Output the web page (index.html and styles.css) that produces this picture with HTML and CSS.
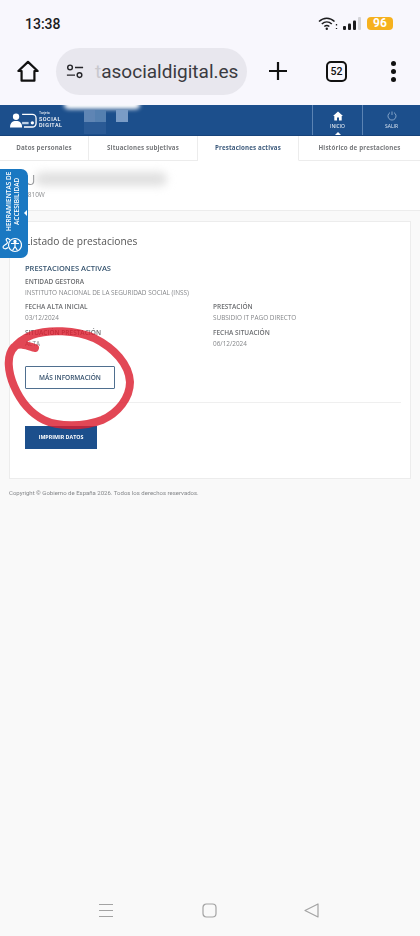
FILE: index.html
```html
<!DOCTYPE html>
<html lang="es">
<head>
    <meta charset="UTF-8">
    <meta name="viewport" content="width=device-width, initial-scale=1.0">
    <title>Tarjeta Social Digital</title>
    <link rel="stylesheet" href="styles.css">
</head>
<body>
    <div class="phone">
        <div class="status-bar">
            <span class="clock">13:38</span>
            <div class="status-icons">
                <svg width="20" height="15" viewBox="0 0 20 15" fill="none" stroke="#1c1c1e" stroke-width="1.5">
                    <path d="M1 5.500C5.500 1 12 1 16.500 5.500"/>
                    <path d="M3.800 8C6.800 5.300 10.800 5.300 13.800 8"/>
                    <path d="M6.300 10.500C7.800 9.200 9.800 9.200 11.300 10.500"/>
                    <circle cx="8.800" cy="12.800" r="1.200" fill="#1c1c1e" stroke="none"/>
                    <path d="M18.500 8v1.500M18.500 12v1" stroke-width="1.300"/>
                </svg>
                <svg width="19" height="14" viewBox="0 0 19 14" fill="#1c1c1e">
                    <rect x="0" y="9" width="3" height="4" rx="1"/>
                    <rect x="5" y="6.500" width="3" height="6.500" rx="1"/>
                    <rect x="10" y="3.500" width="3" height="9.500" rx="1"/>
                    <rect x="15" y="0" width="3" height="13" rx="1" fill="#d4d4d8"/>
                </svg>
                <span class="battery">96</span>
            </div>
        </div>

        <div class="toolbar">
            <svg class="tool-home" width="22" height="22" viewBox="0 0 24 24" fill="none" stroke="#111" stroke-width="2.400" stroke-linejoin="round">
                <path d="M1.500 12 12 2l10.500 10H19v10.500H5V12z"/>
            </svg>
            <div class="url-pill">
                <svg width="18" height="15" viewBox="0 0 20 16" fill="none" stroke="#26262a" stroke-width="1.600">
                    <circle cx="4.500" cy="3.500" r="2.600"/>
                    <path d="M10 3.500h9M1 12h9"/>
                    <circle cx="15" cy="12" r="2.600"/>
                </svg>
                <span class="url-text"><span class="url-fade">t</span>asocialdigital.es</span>
            </div>
            <svg class="tool-plus" width="20" height="20" viewBox="0 0 20 20" stroke="#111" stroke-width="2.200">
                <path d="M10 1v18M1 10h18"/>
            </svg>
            <span class="tab-count">52</span>
            <div class="tool-menu"><i></i><i></i><i></i></div>
        </div>

        <div class="site">
            <header class="site-header">
                <div class="logo">
                    <svg width="27" height="15" viewBox="0 0 29 16" fill="#fff">
                        <circle cx="6.500" cy="4" r="3.400"/>
                        <path d="M0 15.500c0-5 2.500-7 6.500-7s6.500 2 6.500 7z"/>
                        <path d="M13 1.500h11a4 4 0 0 1 4 4v5.500a4 4 0 0 1-4 4h-9" fill="none" stroke="#fff" stroke-width="1.400"/>
                        <rect x="13" y="9.500" width="7" height="2.500" fill="#bcd0e6"/>
                        <circle cx="24" cy="10.500" r="1.800"/>
                    </svg>
                    <div class="logo-text">
                        <small>Tarjeta</small>
                        <b>SOCIAL</b>
                        <b>DIGITAL</b>
                    </div>
                </div>
                <nav class="header-nav">
                    <a class="nav-item nav-current">
                        <svg width="10" height="10" viewBox="0 0 10 10" fill="#fff"><path d="M5 .5 10 5H8.700v4.500H6V6.500H4v3H1.300V5H0z"/></svg>
                        <span>INICIO</span>
                    </a>
                    <a class="nav-item nav-exit">
                        <svg width="10" height="10" viewBox="0 0 10 10" fill="none" stroke="#9db8d6" stroke-width=".8"><path d="M3 1.600a4 4 0 1 0 4 0M5 .5v3.500"/></svg>
                        <span>SALIR</span>
                    </a>
                </nav>
                <div class="glow"></div>
                <div class="pixel-patch"><i></i><i></i><i></i><i></i><i></i><i></i></div>
            </header>

            <div class="tabs">
                <a class="tab tab-a">Datos personales</a>
                <a class="tab tab-b">Situaciones subjetivas</a>
                <a class="tab tab-c tab-active">Prestaciones activas</a>
                <a class="tab tab-d">Histórico de prestaciones</a>
            </div>

            <section class="person">
                <div class="person-name">DU<span class="name-blur"></span></div>
                <div class="person-id">0810W</div>
            </section>

            <main class="content">
                <div class="card">
                    <h1>Listado de prestaciones</h1>
                    <h2>PRESTACIONES ACTIVAS</h2>
                    <div class="field field-first">
                        <h3>ENTIDAD GESTORA</h3>
                        <p>INSTITUTO NACIONAL DE LA SEGURIDAD SOCIAL (INSS)</p>
                    </div>
                    <div class="field-grid">
                        <div class="field">
                            <h3>FECHA ALTA INICIAL</h3>
                            <p>03/12/2024</p>
                        </div>
                        <div class="field">
                            <h3>PRESTACIÓN</h3>
                            <p>SUBSIDIO IT PAGO DIRECTO</p>
                        </div>
                        <div class="field">
                            <h3>SITUACIÓN PRESTACIÓN</h3>
                            <p>ALTA</p>
                        </div>
                        <div class="field">
                            <h3>FECHA SITUACIÓN</h3>
                            <p>06/12/2024</p>
                        </div>
                    </div>
                    <a class="btn-more">MÁS INFORMACIÓN</a>
                    <hr>
                    <a class="btn-print">IMPRIMIR DATOS</a>
                </div>
                <p class="copyright">Copyright © Gobierno de España 2026. Todos los derechos reservados.</p>
            </main>

            <div class="nav-bar">
                <svg width="16" height="15" viewBox="0 0 16 15" stroke="#a3a3a3" stroke-width="1.200"><path d="M1 1.500h14M1 7.500h14M1 13.500h14"/></svg>
                <svg width="15" height="15" viewBox="0 0 15 15" fill="none" stroke="#a3a3a3" stroke-width="1.200"><rect x="1" y="1" width="13" height="13" rx="3.500"/></svg>
                <svg width="15" height="15" viewBox="0 0 15 15" fill="none" stroke="#a3a3a3" stroke-width="1.200" stroke-linejoin="round"><path d="M14 1v13L1 7.500z"/></svg>
            </div>

            <aside class="access-tab">
                <div class="access-label">HERRAMIENTAS DE<br>ACCESIBILIDAD</div>
                <span class="access-arrow"></span>
                <svg width="20" height="20" viewBox="0 0 20 20" fill="none" stroke="#fff" stroke-width="1.200">
                    <circle cx="13" cy="11" r="6.500"/>
                    <circle cx="13" cy="7.500" r="1.100" fill="#fff"/>
                    <path d="M9 9.500h8M13 9.500v3l-2.500 4M13 12.500l2.500 4"/>
                    <path d="M8 6C5 3 3 5 5 7.500S1 11 1 13s3 2.500 5 .5"/>
                </svg>
            </aside>

            <svg class="scribble" width="140" height="112" viewBox="0 0 140 112" fill="none" stroke="#dc1f30" stroke-opacity=".82" stroke-width="8" stroke-linecap="round" stroke-linejoin="round">
                <path d="M35 28C28 26 20 22 14 27 6 36 8 52 14 66 20 80 30 93 44 100 58 107 84 107 102 100 118 93 130 78 130 62 129 44 114 28 94 18 76 10 48 9 32 15 24 18 17 23 12 30"/>
            </svg>
        </div>
    </div>
</body>
</html>
```

FILE: styles.css
```css
* {
    margin: 0;
    padding: 0;
    box-sizing: border-box;
}

html,
body {
    height: 100%;
}

body {
    background: #f9f9f9;
    font-family: 'Open Sans', sans-serif;
    overflow: hidden;
}

.phone {
    height: 936px;
    display: flex;
    flex-direction: column;
}

/* status bar + browser toolbar */
.status-bar {
    height: 47px;
    padding: 0 27px 0 25px;
    background: #f8f7fd;
    display: flex;
    align-items: center;
    justify-content: space-between;
}

.clock {
    font-family: Roboto, sans-serif;
    font-size: 14px;
    font-weight: 500;
    color: #1c1c1e;
}

.status-icons {
    display: flex;
    align-items: center;
    gap: 5px;
}

.battery {
    width: 26px;
    height: 13px;
    border-radius: 4px;
    background: #f6b11e;
    color: #fff;
    font-family: Roboto, sans-serif;
    font-size: 12px;
    font-weight: 700;
    line-height: 13px;
    text-align: center;
}

.toolbar {
    height: 58px;
    padding-bottom: 10px;
    background: #f8f7fd;
    display: flex;
    align-items: center;
}

.tool-home {
    margin-left: 17px;
}

.url-pill {
    width: 191px;
    height: 47px;
    margin-left: 17px;
    padding-left: 10px;
    border-radius: 24px;
    background: #e8e7ee;
    display: flex;
    align-items: center;
    gap: 11px;
    overflow: hidden;
}

.url-text {
    font-family: Roboto, sans-serif;
    font-size: 19px;
    color: #3a3a40;
    white-space: nowrap;
}

.url-fade {
    color: #c9c9ce;
}

.tool-plus {
    margin-left: 21px;
}

.tab-count {
    width: 21px;
    height: 21px;
    margin-left: 38px;
    border: 2px solid #111;
    border-radius: 5px;
    color: #111;
    font-family: Roboto, sans-serif;
    font-size: 10.500px;
    font-weight: 500;
    line-height: 17px;
    text-align: center;
}

.tool-menu {
    margin-left: 44px;
    display: flex;
    flex-direction: column;
    gap: 3px;
}

.tool-menu i {
    width: 5px;
    height: 5px;
    border-radius: 50%;
    background: #111;
}

/* site */
.site {
    position: relative;
    flex: 1;
    display: flex;
    flex-direction: column;
    filter: blur(.35px);
}

.site-header {
    position: relative;
    height: 31px;
    background: #1c4f8c;
    display: flex;
    align-items: stretch;
    border-bottom: 1px solid #17437a;
    overflow: hidden;
}

.logo {
    margin-left: 10px;
    display: flex;
    align-items: center;
    gap: 2px;
    color: #fff;
}

.logo-text {
    display: flex;
    flex-direction: column;
    font-family: Roboto, sans-serif;
}

.logo-text small {
    font-size: 3.500px;
    line-height: 4.200px;
}

.logo-text b {
    font-size: 5.500px;
    font-weight: 500;
    line-height: 6.500px;
    letter-spacing: .5px;
}

.glow {
    position: absolute;
    left: 64px;
    top: -5px;
    width: 76px;
    height: 9px;
    border-radius: 5px;
    background: #fff;
    filter: blur(2px);
}

.pixel-patch {
    position: absolute;
    left: 84px;
    top: 5px;
    display: grid;
    grid-template-columns: repeat(4, 11px);
    grid-auto-rows: 12px;
}

.pixel-patch i:nth-child(1) {
    background: #5f85b4;
}

.pixel-patch i:nth-child(2) {
    background: #5580b0;
}

.pixel-patch i:nth-child(4) {
    grid-column: 4;
    background: #7a9cc6;
    margin-left: -1px;
}

.pixel-patch i:nth-child(5) {
    background: #2a5a95;
}

.pixel-patch i:nth-child(6) {
    background: #2a5a95;
}

.header-nav {
    margin-left: auto;
    display: flex;
}

.nav-item {
    width: 50px;
    border-left: 1px solid #5b83b3;
    color: #fff;
    font-size: 5px;
    display: flex;
    flex-direction: column;
    align-items: center;
    justify-content: center;
    gap: 2px;
}

.nav-exit {
    width: 58px;
    color: #dbe6f2;
}

.nav-current {
    position: relative;
}

.nav-current::after {
    content: "";
    position: absolute;
    left: 22px;
    bottom: 0;
    border: 3px solid transparent;
    border-top: 0;
    border-bottom-color: #fff;
}

.tabs {
    height: 25px;
    display: flex;
    background: #fff;
}

.tab {
    font-size: 6.200px;
    font-weight: 700;
    letter-spacing: .15px;
    color: #77797c;
    text-align: center;
    line-height: 23px;
    border-right: 1px solid #ececec;
    border-bottom: 1px solid #ececec;
}

.tab-a {
    width: 89px;
}

.tab-b {
    width: 109px;
}

.tab-c {
    width: 101px;
}

.tab-d {
    width: 121px;
    border-right: 0;
}

.tab-active {
    color: #3c5a7c;
    border-bottom-color: #fff;
}

.person {
    height: 50px;
    padding: 9px 0 0 15px;
    background: #fff;
    border-bottom: 1px solid #ececec;
    color: #8b8d90;
}

.person-name {
    height: 20px;
    font-size: 14px;
    line-height: 20px;
    position: relative;
}

.name-blur {
    position: absolute;
    left: 20px;
    top: 2px;
    width: 132px;
    height: 14px;
    border-radius: 8px;
    background: #e0e0e0;
    filter: blur(4px);
}

.person-id {
    font-size: 6.500px;
    margin-left: 9px;
}

.content {
    flex: 1;
    padding: 10px 9px 0 9px;
    background: #f9f9f9;
}

.card {
    height: 258px;
    padding: 12px 9px 0 15px;
    background: #fff;
    border: 1px solid #ececec;
}

.card h1 {
    font-size: 10.200px;
    font-weight: 400;
    line-height: 14px;
    color: #555;
}

.card h2 {
    margin-top: 15px;
    font-size: 7.500px;
    font-weight: 600;
    line-height: 11px;
    color: #36546f;
}

.field {
    height: 26px;
}

.field-first {
    height: 25px;
    margin-top: 2px;
}

.field h3 {
    font-size: 6.500px;
    font-weight: 600;
    line-height: 11px;
    color: #6b6d70;
}

.field p {
    font-size: 6.400px;
    line-height: 12px;
    color: #85878a;
}

.field-grid {
    display: grid;
    grid-template-columns: 188px 1fr;
}

.btn-more {
    display: block;
    width: 90px;
    height: 23px;
    margin-top: 13px;
    border: 1px solid #4f6f8f;
    border-radius: 1px;
    font-size: 6.500px;
    font-weight: 600;
    line-height: 21px;
    text-align: center;
    color: #35506c;
}

.card hr {
    margin-top: 13px;
    border: 0;
    border-top: 1px solid #efefef;
}

.btn-print {
    display: block;
    width: 72px;
    height: 23px;
    margin-top: 23px;
    background: #1c4f8c;
    color: #fff;
    font-size: 5.300px;
    font-weight: 700;
    line-height: 23px;
    text-align: center;
}

.copyright {
    margin-top: 10px;
    font-family: Roboto, sans-serif;
    font-size: 6px;
    color: #85878a;
}

.nav-bar {
    height: 56px;
    padding: 4px 101px 0 98px;
    background: #f9f9f9;
    display: flex;
    align-items: center;
    justify-content: space-between;
}

/* overlays */
.access-tab {
    position: absolute;
    left: 0;
    top: 64px;
    width: 28px;
    height: 89px;
    border-radius: 0 7px 7px 0;
    background: #1a78c2;
    color: #fff;
}

.access-tab svg {
    position: absolute;
    left: 2px;
    bottom: 4px;
}

.access-label {
    position: absolute;
    left: 5px;
    top: 2px;
    height: 60px;
    writing-mode: vertical-rl;
    transform: rotate(180deg);
    font-size: 6.500px;
    font-weight: 600;
    line-height: 7.500px;
    text-align: center;
    white-space: nowrap;
}

.access-arrow {
    position: absolute;
    right: 1px;
    top: 41px;
    border: 3px solid transparent;
    border-left: 0;
    border-right-color: #fff;
}

.scribble {
    position: absolute;
    left: 0;
    top: 215px;
    filter: blur(.6px);
}
```
